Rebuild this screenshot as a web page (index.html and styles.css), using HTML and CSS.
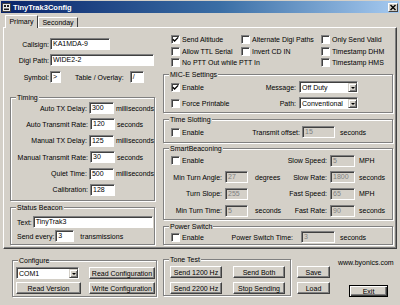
FILE: index.html
```html
<!DOCTYPE html>
<html>
<head>
<meta charset="utf-8">
<title>TinyTrak3Config</title>
<link rel="stylesheet" href="styles.css">
</head>
<body>
<div class="win">
  <div class="title">
    <svg class="ticon" width="9" height="9" viewBox="0 0 9 9">
      <rect x="0.5" y="0.5" width="8" height="8" fill="#e8e8e8" stroke="#404040" stroke-width="1"/>
      <rect x="2" y="2" width="2" height="2" fill="#202020"/>
      <rect x="5" y="2" width="2" height="2" fill="#202020"/>
      <rect x="2" y="5.5" width="5" height="1.5" fill="#202020"/>
    </svg>
    <span class="ttext">TinyTrak3Config</span>
    <span class="close"><svg width="8" height="7" viewBox="0 0 8 7"><path d="M1.5 1 L6.5 6 M6.5 1 L1.5 6" stroke="#000" stroke-width="1.4"/></svg></span>
  </div>

  <div class="tabs">
    <div class="tab active">Primary</div>
    <div class="tab">Seconday</div>
  </div>

  <div class="panel">
    <div class="lcol">
      <div class="frow r1"><span class="flbl">Callsign:</span><span class="edit w60">KA1MDA-9</span></div>
      <div class="frow r2"><span class="flbl">Digi Path:</span><span class="edit w104">WIDE2-2</span></div>
      <div class="frow r3"><span class="flbl">Symbol:</span><span class="edit w11">&gt;</span><span class="tlbl">Table / Overlay:</span><span class="edit w14">/</span></div>

      <div class="group timing">
        <span class="legend">Timing</span>
        <div class="trow"><span class="tl">Auto TX Delay:</span><span class="edit w25">300</span><span class="unit">milliseconds</span></div>
        <div class="trow"><span class="tl">Auto Transmit Rate:</span><span class="edit w25">120</span><span class="unit">seconds</span></div>
        <div class="trow"><span class="tl">Manual TX Delay:</span><span class="edit w25">125</span><span class="unit">milliseconds</span></div>
        <div class="trow"><span class="tl">Manual Transmit Rate:</span><span class="edit w25">30</span><span class="unit">seconds</span></div>
        <div class="trow"><span class="tl">Quiet Time:</span><span class="edit w25">500</span><span class="unit">milliseconds</span></div>
        <div class="trow"><span class="tl">Calibration:</span><span class="edit w25">128</span></div>
      </div>

      <div class="group status">
        <span class="legend">Status Beacon</span>
        <div class="srow"><span class="slbl">Text:</span><span class="edit wtext">TinyTrak3</span></div>
        <div class="srow"><span class="slbl">Send every:</span><span class="edit w19">3</span><span class="sunit">transmissions</span></div>
      </div>
    </div>

    <div class="rcol">
      <div class="checks">
        <div class="cb"><span class="box"><svg class="tick" width="7" height="7" viewBox="0 0 7 7"><path d="M0.8 3.2 L2.6 5 L6.2 1.4" fill="none" stroke="#000" stroke-width="1.3"/></svg></span>Send Altitude</div>
        <div class="cb"><span class="box"></span>Alternate Digi Paths</div>
        <div class="cb"><span class="box"></span>Only Send Valid</div>
        <div class="cb"><span class="box"></span>Allow TTL Serial</div>
        <div class="cb"><span class="box"></span>Invert CD IN</div>
        <div class="cb"><span class="box"></span>Timestamp DHM</div>
        <div class="cb span2"><span class="box"></span>No PTT Out while PTT In</div>
        <div class="cb"><span class="box"></span>Timestamp HMS</div>
      </div>

      <div class="group mice">
        <span class="legend">MIC-E Settings</span>
        <div class="mrow">
          <div class="cb"><span class="box"><svg class="tick" width="7" height="7" viewBox="0 0 7 7"><path d="M0.8 3.2 L2.6 5 L6.2 1.4" fill="none" stroke="#000" stroke-width="1.3"/></svg></span>Enable</div>
          <span class="mlab">Message:</span>
          <span class="combo w59"><span class="cv">Off Duty</span><span class="dd"><i></i></span></span>
        </div>
        <div class="mrow">
          <div class="cb"><span class="box"></span>Force Printable</div>
          <span class="mlab">Path:</span>
          <span class="combo w59"><span class="cv">Conventional</span><span class="dd"><i></i></span></span>
        </div>
      </div>

      <div class="group slot">
        <span class="legend">Time Slotting</span>
        <div class="prow">
          <div class="cb"><span class="box"></span>Enable</div>
          <span class="plab">Transmit offset:</span>
          <span class="edit dis w33">15</span>
          <span class="punit">seconds</span>
        </div>
      </div>

      <div class="group smart">
        <span class="legend">SmartBeaconing</span>
        <div class="sbrow">
          <div class="sbcb"><div class="cb"><span class="box"></span>Enable</div></div>
          <span class="l2">Slow Speed:</span><span class="edit dis w25">5</span><span class="u2">MPH</span>
        </div>
        <div class="sbrow">
          <span class="l1">Min Turn Angle:</span><span class="edit dis w23">27</span><span class="u1">degrees</span>
          <span class="l2">Slow Rate:</span><span class="edit dis w25">1800</span><span class="u2">seconds</span>
        </div>
        <div class="sbrow">
          <span class="l1">Turn Slope:</span><span class="edit dis w23">255</span><span class="u1"></span>
          <span class="l2">Fast Speed:</span><span class="edit dis w25">65</span><span class="u2">MPH</span>
        </div>
        <div class="sbrow">
          <span class="l1">Min Turn Time:</span><span class="edit dis w23">5</span><span class="u1">seconds</span>
          <span class="l2">Fast Rate:</span><span class="edit dis w25">90</span><span class="u2">seconds</span>
        </div>
      </div>

      <div class="group power">
        <span class="legend">Power Switch</span>
        <div class="prow">
          <div class="cb"><span class="box"></span>Enable</div>
          <span class="plab pw">Power Switch Time:</span>
          <span class="edit dis w34">3</span>
          <span class="punit">seconds</span>
        </div>
      </div>
    </div>
  </div>

  <div class="bottom">
    <div class="group config">
      <span class="legend">Configure</span>
      <div class="crow">
        <span class="combo w63"><span class="cv">COM1</span><span class="dd"><i></i></span></span>
        <span class="btn bcfg">Read Configuration</span>
      </div>
      <div class="crow">
        <span class="btn bver">Read Version</span>
        <span class="btn bcfg2">Write Configuration</span>
      </div>
    </div>

    <div class="group tone">
      <span class="legend">Tone Test</span>
      <div class="crow">
        <span class="btn w52">Send 1200 Hz</span>
        <span class="btn w52 gap11">Send Both</span>
      </div>
      <div class="crow">
        <span class="btn w52">Send 2200 Hz</span>
        <span class="btn w52 gap11">Stop Sending</span>
      </div>
    </div>

    <div class="sl">
      <span class="btn">Save</span>
      <span class="btn">Load</span>
    </div>

    <div class="rside">
      <span class="web">www.byonics.com</span>
      <span class="btn exit">Exit</span>
    </div>
  </div>
</div>
</body>
</html>
```

FILE: styles.css
```css
* { box-sizing: border-box; }
html, body { margin: 0; padding: 0; }
body {
  background: #d4d0c8;
  font-family: "Liberation Sans", Arial, sans-serif;
  font-size: 7px;
  color: #000;
  width: 400px;
  height: 305px;
  overflow: hidden;
}
.win { width: 400px; height: 305px; background: #d4d0c8; }

/* title bar */
.title {
  margin: 1px 1px 0 1px;
  height: 12px;
  background: linear-gradient(to right, #0a246a, #3a6ea5 55%, #a6caf0);
  display: flex;
  align-items: center;
  color: #fff;
  font-weight: bold;
  font-size: 7.5px;
}
.ticon { margin-left: 1px; flex: none; }
.ttext { margin-left: 2px; }
.close {
  margin-left: auto;
  margin-right: 1px;
  width: 10px;
  height: 9px;
  background: #d4d0c8;
  border: 1px solid;
  border-color: #fff #404040 #404040 #fff;
  display: flex;
  align-items: center;
  justify-content: center;
}

/* tabs */
.tabs {
  display: flex;
  align-items: flex-end;
  height: 14px;
  padding-left: 5px;
  position: relative;
  z-index: 2;
}
.tab {
  background: #d4d0c8;
  border: 1px solid;
  border-color: #fff #404040 transparent #fff;
  border-bottom: none;
  border-radius: 1px 1px 0 0;
  height: 10px;
  display: flex;
  align-items: center;
  justify-content: center;
  width: 40px;
  line-height: 8px;
}
.tab.active {
  width: 33px;
  height: 13px;
  margin-bottom: -1px;
  padding-bottom: 1px;
}

/* panel */
.panel {
  margin-left: 3px;
  width: 394px;
  height: 222px;
  border: 1px solid;
  border-color: #fff #404040 #404040 #fff;
  box-shadow: inset -1px -1px 0 #808080;
  display: flex;
  padding-top: 6px;
}
.lcol { margin-left: 6px; width: 145px; display: flex; flex-direction: column; }
.rcol { margin-left: 8px; width: 230px; display: flex; flex-direction: column; }

.frow { display: flex; align-items: center; height: 12px; }
.r1 { margin-top: 4px; }
.r2 { margin-top: 4px; }
.r3 { margin-top: 5px; }
.flbl { width: 40px; text-align: right; padding-right: 1px; }
.tlbl { margin-left: 14px; margin-right: 6px; white-space: nowrap; }

/* text fields */
.edit {
  display: block;
  height: 12px;
  background: #fff;
  border: 1px solid;
  border-color: #808080 #fff #fff #808080;
  box-shadow: inset 1px 1px 0 #404040;
  padding-left: 2px;
  line-height: 10px;
  white-space: nowrap;
  overflow: hidden;
  flex: none;
}
.edit.dis { background: #d4d0c8; color: #808080; }
.w11 { width: 11px; }
.w14 { width: 14px; }
.w19 { width: 19px; }
.w23 { width: 23px; }
.w25 { width: 25px; }
.w33 { width: 33px; }
.w34 { width: 34px; }
.w60 { width: 60px; }
.w104 { width: 104px; }
.edit.wtext { flex: 1; margin-right: 1px; }

/* group boxes */
.group {
  position: relative;
  border: 1px solid #808080;
  box-shadow: inset 1px 1px 0 #fff, 1px 1px 0 #fff;
  flex: none;
}
.legend {
  position: absolute;
  top: -5px;
  left: 5px;
  background: #d4d0c8;
  padding: 0 1px;
  line-height: 9px;
  white-space: nowrap;
}

.timing {
  margin-top: 14px;
  height: 104px;
  padding-top: 4px;
  display: flex;
  flex-direction: column;
  gap: 4.4px;
}
.trow { display: flex; align-items: center; height: 12px; }
.tl { width: 77px; text-align: right; margin-right: 2px; white-space: nowrap; }
.unit { margin-left: 2px; }

.status {
  margin-top: 6px;
  height: 38px;
  padding: 8px 0 0 6px;
  display: flex;
  flex-direction: column;
  gap: 2px;
}
.srow { display: flex; align-items: center; height: 12px; }
.slbl { margin-right: 1px; white-space: nowrap; }
.sunit { margin-left: 6px; }

/* checkboxes */
.checks {
  display: grid;
  grid-template-columns: 70px 80px 72px;
  grid-auto-rows: 11.5px;
  align-items: center;
  padding-left: 8px;
  height: 34.5px;
}
.span2 { grid-column: 1 / 3; }
.cb { display: flex; align-items: center; white-space: nowrap; }
.box {
  width: 9px;
  height: 9px;
  background: #fff;
  border: 1px solid;
  border-color: #808080 #fff #fff #808080;
  box-shadow: inset 1px 1px 0 #404040;
  margin-right: 2px;
  flex: none;
  display: flex;
  align-items: center;
  justify-content: center;
}
.tick { display: block; }

/* MIC-E */
.mice {
  margin-top: 5.5px;
  height: 39px;
  padding-top: 6px;
  display: flex;
  flex-direction: column;
  gap: 4px;
}
.mrow { display: flex; align-items: center; height: 12px; padding-left: 7px; padding-right: 34px; }
.mlab { flex: 1; text-align: right; padding-right: 3px; }

.combo {
  display: flex;
  height: 12px;
  background: #fff;
  border: 1px solid;
  border-color: #808080 #fff #fff #808080;
  box-shadow: inset 1px 1px 0 #404040;
  padding: 1px 0 0 1px;
  flex: none;
}
.w59 { width: 59px; }
.w63 { width: 63px; }
.cv { flex: 1; padding-left: 1px; line-height: 9px; white-space: nowrap; overflow: hidden; }
.dd {
  width: 9px;
  height: 9px;
  background: #d4d0c8;
  border: 1px solid;
  border-color: #d4d0c8 #404040 #404040 #d4d0c8;
  box-shadow: inset 1px 1px 0 #fff, inset -1px -1px 0 #808080;
  display: flex;
  align-items: center;
  justify-content: center;
  flex: none;
}
.dd i {
  display: block;
  width: 0;
  height: 0;
  border-left: 2.5px solid transparent;
  border-right: 2.5px solid transparent;
  border-top: 2.5px solid #000;
}

/* time slotting / power */
.slot {
  margin-top: 6px;
  height: 24px;
  padding-top: 6px;
}
.prow { display: flex; align-items: center; height: 12px; padding-left: 7px; }
.plab { flex: 1; text-align: right; padding-right: 2px; white-space: nowrap; }
.plab.pw { padding-right: 8px; }
.punit { margin-left: 5px; width: 52px; }

.power {
  margin-top: 6px;
  height: 19px;
  padding-top: 4px;
}

/* smartbeaconing */
.smart {
  margin-top: 5px;
  height: 72px;
  padding-top: 5.5px;
  display: flex;
  flex-direction: column;
  gap: 4.7px;
}
.sbrow { display: flex; align-items: center; height: 12px; }
.sbcb { width: 119px; padding-left: 7px; }
.l1 { width: 58px; text-align: right; margin-right: 3px; white-space: nowrap; }
.u1 { margin-left: 7px; width: 28px; }
.l2 { width: 44px; text-align: right; margin-right: 3px; white-space: nowrap; }
.u2 { margin-left: 4px; }

/* bottom area */
.bottom { display: flex; align-items: flex-start; height: 56px; }
.config {
  margin-left: 12px;
  margin-top: 11px;
  width: 145px;
  height: 37px;
  padding: 6px 0 0 3px;
  display: flex;
  flex-direction: column;
  gap: 3px;
}
.crow { display: flex; align-items: center; height: 12px; }
.btn {
  height: 12px;
  display: flex;
  align-items: center;
  justify-content: center;
  background: #d4d0c8;
  border: 1px solid;
  border-color: #fff #404040 #404040 #fff;
  box-shadow: inset -1px -1px 0 #808080;
  white-space: nowrap;
  flex: none;
}
.bcfg { width: 66px; margin-left: 10px; }
.bver { width: 65px; }
.bcfg2 { width: 66px; margin-left: 8px; }

.tone {
  margin-left: 6px;
  margin-top: 10px;
  width: 128px;
  height: 37px;
  padding: 6px 0 0 6px;
  display: flex;
  flex-direction: column;
  gap: 4px;
}
.w52 { width: 52px; }
.gap11 { margin-left: 11px; }

.sl {
  margin-left: 6px;
  margin-top: 17px;
  width: 33px;
  display: flex;
  flex-direction: column;
  gap: 4px;
}

.rside { margin-left: 8px; display: flex; flex-direction: column; }
.web { margin-top: 10px; line-height: 8px; white-space: nowrap; }
.exit {
  margin-top: 18px;
  margin-left: 11px;
  width: 39px;
  border: 1px solid #000;
  box-shadow: inset 1px 1px 0 #fff, inset -1px -1px 0 #404040, inset -2px -2px 0 #808080;
}
```
